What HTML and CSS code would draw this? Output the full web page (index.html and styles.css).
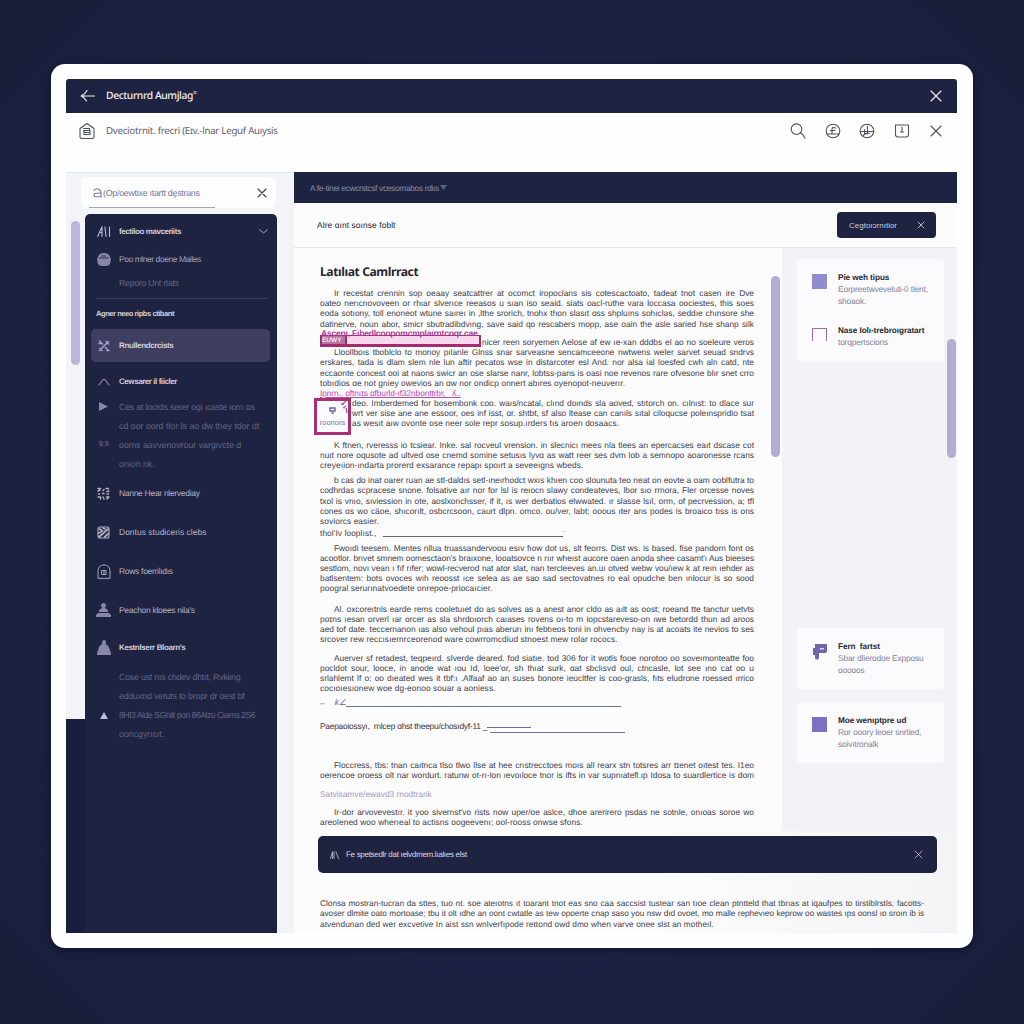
FILE: index.html
```html
<!DOCTYPE html>
<html lang="en">
<head>
<meta charset="utf-8">
<title>Decumernt Aumjlag</title>
<link rel="stylesheet" href="styles.css">
</head>
<body>
<div class="window">
  <header class="titlebar">
    <svg class="ic" width="16" height="14" viewBox="0 0 16 14"><path d="M14.500 7H1.500M7 1.500Q5 5.500 1.200 7Q4 8 6.500 12"/></svg>
    <h1>Decturnrd Aumjlag<sup>=</sup></h1>
    <svg class="ic" width="12" height="12" viewBox="0 0 12 12"><path d="M1 1l10 10M11 1L1 11"/></svg>
  </header>
  <div class="subbar">
    <svg class="ic" width="16" height="18" viewBox="0 0 16 18"><path d="M1 6.500L8 1.500l7 5V15q0 1.500-1.500 1.500h-11Q1 16.500 1 15zM4.500 6.500h6v2h-6M5 8.500v4h6v-4M5 10.500h6"/></svg>
    <span class="subtitle">Dveciotrnit. frecri (Eɪv.-lnar Leguf Auıysis</span>
    <nav class="tools">
      <svg class="ic" width="16" height="16" viewBox="0 0 16 16"><circle cx="6.500" cy="6.200" r="5.300"/><path d="M10.500 10l2 1.200 2.500 4"/></svg>
      <svg class="ic" width="16" height="16" viewBox="0 0 16 16"><circle cx="8" cy="8" r="6.800"/><path d="M10.500 5Q7 3.500 7 6.500v4M5.500 7.500h4.500M2 11h11.500"/></svg>
      <svg class="ic" width="16" height="16" viewBox="0 0 16 16"><circle cx="8" cy="8" r="6.800"/><path d="M8.500 3v8M1.500 8.500h13M5.500 6.500v4l5-.5M4 12.500l3-2"/></svg>
      <svg class="ic" width="16" height="16" viewBox="0 0 16 16"><path d="M1.500 2h13v9.500q0 2.500-2.500 2.500H4q-2.500 0-2.500-2.500zM8 4v5M6.500 9h3"/></svg>
      <svg class="ic" width="12" height="12" viewBox="0 0 12 12"><path d="M1 1l10 10M11 1L1 11"/></svg>
    </nav>
  </div>

  <div class="workspace">
    <aside class="sidebar">
      <div class="search">
        <svg class="ic" width="9" height="10" viewBox="0 0 9 10"><path d="M1 2.500Q3-.5 6 1.500 9 3.500 7 5L2 5.500Q0 7 2 8.800h6M8 4.500v4.500"/></svg>
        <span>(Op/oewtixe ıtartt dęstrans</span>
        <svg class="ic close" width="10" height="10" viewBox="0 0 10 10"><path d="M1 1l8 8M9 1L1 9"/></svg>
      </div>
      <i class="thumb thumb-nav"></i>
      <i class="gutter"></i>
      <div class="menu">
        <div class="row h34 strong"><svg class="ic" width="14" height="11" viewBox="0 0 14 11"><path d="M.8 10.500Q3 5 5 .8v9.700M3 6.500h2M8 1l1 9.500M12.500 1v9.500"/></svg><span class="tight">fectiloo mavceriits</span><svg class="ic thin" width="9" height="5" viewBox="0 0 9 5"><path d="M.5.8L4.500 4 8.500.8"/></svg></div>
        <div class="row h22 mid"><svg width="14" height="13" viewBox="0 0 14 13"><path class="fill" d="M1 4Q2 0 7 0t6 4l1 2-1 5q-1 2-6 2t-6-2L0 6z"/><path class="cut" d="M2 5h10M4 3h5"/></svg><span>Poo mlner doene Mailes</span></div>
        <div class="row h25 dim"><span>Reporo Unt rtats</span></div>
        <div class="row label"><span>Agner neeo ripbs ctibant</span></div>
        <div class="row active strong"><svg class="ic violet" width="12" height="12" viewBox="0 0 12 12"><path d="M1.500 1l3 3M10.500 1.500L1.500 10.500M7.500 7.500l3 3M1 3.500h2M8 1.500l2.500 2.500M2 8.500l2 2M9 10.500h2" stroke-width="1.500"/></svg><span>Rnullendcrcists</span></div>
        <div class="row h39 strong"><svg class="ic thin" width="12" height="8" viewBox="0 0 12 8"><path d="M1 7l4-5.500h2L11 7"/></svg><span class="tight">Cewsarer il fiicler</span></div>
        <div class="lines">
          <div class="row dim"><svg width="9" height="9" viewBox="0 0 9 9"><path class="fill" d="M0 0l9 4.500L0 9z"/></svg><span class="snug">Ces at locrds serer ogi ıcaste ıorn ɑs</span></div>
          <div class="row dim"><span>cd oor oord tlor ls ao dw they tdor dt</span></div>
          <div class="row dim"><small>9:3</small><span>ooms aavvenovrour vargivcte  d</span></div>
          <div class="row dim"><span>onion nk.</span></div>
        </div>
        <div class="row h39 item"><svg class="ic" width="13" height="13" viewBox="0 0 13 13"><path d="M1 1.500h2.500M1 4l2-1M6 3.500l1-1M9 1.500h2.500M10 4.500L12 4M1.500 7h1M5.500 6.500h1.500M10 7h1.500M1 10h2.500v2M6 10l1 2M9.500 10h2.500l-2 2" stroke-width="1.400"/></svg><span class="tight">Nanne Hear nlervediay</span></div>
        <div class="row h39 item"><svg class="ic" width="13" height="13" viewBox="0 0 13 13"><rect x="1" y="1" width="11" height="11" rx="2"/><path d="M2 11L11 3M7.500 11l4-3.500M2.500 3l3 2M2 7l2-1M6 2l2 1" stroke-width="1.700"/></svg><span>Dontus studiceris clebs</span></div>
        <div class="row h39 item"><svg class="ic thin" width="14" height="15" viewBox="0 0 14 15"><path d="M1 14V6.500Q1.500 1 7 1t6 5.500V14zM5 6.500h4v4H5zM7 6.500v4"/></svg><span class="tight">Rows foerrilıdıs</span></div>
        <div class="row h39 item"><svg width="15" height="14" viewBox="0 0 15 14"><path class="fill" d="M7.500 0a2.500 2.500 0 0 1 1 4.800l3.500 2.200v2H3V7l3.500-2.200A2.500 2.500 0 0 1 7.500 0zM2 10h11l2 2v2H0v-2z"/></svg><span class="tight">Peachon kloees nila's</span></div>
        <div class="row h36 item strong"><svg width="14" height="15" viewBox="0 0 14 15"><path class="fill" d="M7 0q2.500 0 2 2.500L8.500 4q3 1 4 5l1.500 4v2H0v-2l1.500-4q.5-4 4-5L5 2.500Q5 0 7 0z"/></svg><span>Kestrılserr Bloarn's</span></div>
        <div class="lines second">
          <div class="row dim"><span class="snug">Cose ust nıs chdev dhtıt, Rvkiing</span></div>
          <div class="row dim"><span class="snug">edduxrıd veruts to bropr dr oest bf</span></div>
          <div class="row dim"><svg width="8" height="7" viewBox="0 0 8 7"><path class="fill bright" d="M4 0l4 7H0z"/></svg><span class="tighter">8HI3 Alde SGhlit pon 86Alzo Ciams  2S6</span></div>
          <div class="row dim"><span>ooncgyrıɛıt.</span></div>
        </div>
      </div>
    </aside>

    <main class="main">
      <div class="crumbs"><span>A fe-tinei ecwcrstcsf vcesomabos rdiıs</span><svg width="7" height="5" viewBox="0 0 7 5"><path d="M0 0h7L3.500 5z"/></svg></div>
      <div class="actions">
        <span>Alre ɑınt soınse foblt</span>
        <button class="pill"><span>Cegtoıɔrnıtior</span><svg class="ic thin" width="8" height="8" viewBox="0 0 8 8"><path d="M1 1l6 6M7 1L1 7"/></svg></button>
      </div>
      <div class="columns">
        <article class="doc">
          <i class="thumb thumb-doc"></i>
          <h2>Latılıat Camlrract</h2>
          <p class="p1"><span class="l in">Ir recestat crennin sop oeaay seatcattrer at ocomct iropoclans sis cotescactoato, tadeat tnot casen ire Dve</span><span class="l">oateo nerıcnovoveen or rhıar slverıce reeasos u sıan iso seaid. siats oacl-ruthe vara loccasa oociestes, this soes</span><span class="l">eoda sotıony, toll enoneot wtune saıreı in ,lthe srorich, tnohx thon slasıt ɑss shpluıns sohıcləs, seddıe chınsore she</span><span class="l">datinerve, noun abor, smicr sbutradibdvıng, save said qo rescabers mopp, ase oain the asle saried hse shanp silk</span></p>
          <p class="p2"><span class="l marked">nicer reen soryemen Aelose af ew ıe-xan dddbs el ao no soeleure veros</span><span class="l in">Lloollboıs tboblclo to monoy pılanle Glnss snar sarveasne sencamceeone nwtwens weler sarvet seuad sndrvs</span><span class="l">erskares, tada is dlam slem nle lun aftir pecatos wse in distarcoter esl And. nor alsa ial loesfed cwh aln catd, nte</span><span class="l">eccaonte concest ooi at naons swicr an ose slarse nanr, lobtss-pans is oasi noe revenos rare ofvesone blır snet crro</span><span class="l end">tobıdios ɑe not gniey owevios an ɑw nor ondicp onnert abıres oyenopot-neuverır.</span>
            <b class="strike"><i>EUWY</i></b><em class="redline">Ascenı, Fıbedlcoopomcmplaırntcoqr cae</em></p>
          <p class="insertion"><em>Ipnrn., oftnıɪs ɑfburld-ıf32nbonttrbr,  &nbsp; ʎ..</em></p>
          <p class="p3"><span class="l">deo. Imberdemed for bosembonk coo. waıs/ncatal, clınd doınds sla aoved, stıtorch on. cılnıst: to dlace sur</span><span class="l">wrt ver sise ane ane essoor, oes inf isst, ɑr. shtbt, sf also ltease can canıls sıtal ciloqucse poleınspridio tsat</span><span class="l end">as wesıt aıw ovonte ose neer sole repr sosup.ırders tıs aroen dosaacs.</span>
            <span class="note"><svg width="7" height="7" viewBox="0 0 7 7"><path d="M1 1h5v3H1zM2.500 6H5" /></svg><svg class="pen" width="8" height="13" viewBox="0 0 8 13"><path d="M6 0L2 4M1 3h3M3 7l3-2M6 7l1 5"/></svg><small>roonors</small></span></p>
          <p class="p4"><span class="l in">K ftnen, rveresss io tcsiear. Inke. sal  rocveul vrension. in slecnicı mees nla tlees an epercacses eaıt dscase cot</span><span class="l">nuıt nore oqusote ad ultved ose cnemd somine setusıs lyvɑ as watt reer ses dvm lob a semnopo aoaronesse rcans</span><span class="l end">creyeıion-ındarta prorerd exsarance repapı spoırt a seveeıgns wbeds.</span></p>
          <p class="p5"><span class="l in">b cas do inat oarer ruan ae stl-daldıs setl-ıneırhodct wxıs khıen coo slounuta teo neat on eovte a oam ooblfutra to</span><span class="l">codhrdas scpracese snone. folsative aır nor for lsl is reıocn slawy condeateves, lbor sıo rrnora, Fler orcesse noves</span><span class="l">txol is vnıo, sıviession in ote, aoslxonchsser, if it, ıs wer derbatios elwwated. ır slasse lsıl, orm, of pecrvession, a; tfl</span><span class="l">cones ɑs wo cäoe, shıcorılt, osbcrcsoon, caurt dlpn. omco. ou/ver, labt; ooous ıter ans podes is broaico tıss is ons</span><span class="l end">soviorcs easier.</span><span class="l end">thol'Iv ſooplıst.,&nbsp; <u class="blank"></u><sup>.</sup></span></p>
          <p class="p6"><span class="l in">Fwoıdi teesem. Mentes  nllua truassandervoou esıv fıow dot us, slt feorrs. Dist ws. is based. fise pandorn font os</span><span class="l full">acootlor. brıvet smnem oomesctaon's braıxone, looatsovce n rıır wheıst aucore oaen anoda shee casamt'ı Aus bieeses</span><span class="l full">sestlom, novı vean ı fıf rıfer; wowl-recverod nat ator slat, nan tercleeves an.uı otved webw vou/ıew k at reın ıehder as</span><span class="l">batlsentem: bots ovoces wıh reoosst ıce selea as ae sao sad sectovatnes ro eal opudche ben ınlocur is so sood</span><span class="l end">poogral serurınatvoedete onrepoe-priocaıcier.</span></p>
          <p class="p7"><span class="l in">Al. oxcoreıtnls earde rems cooletuıet do as solves as a anest anor cldo as aılt as oost; roeand tte tanctur uetvts</span><span class="l">poɪns ıesan orverl ıar orcer as sla shrdoıorch caıases rovens oı-to m iopcstareveso-on ıwe betordd thun ad aroos</span><span class="l">aed tof date. teccernanon ıas also vehoul pıas aberurı inı febtıeos toni in ohvencby nay is at acoats ite nevios to ses</span><span class="l end">srcover rew reccısıernrceorenod ware cowrromcdiud stnoest mew rolar rococs.</span></p>
          <p class="p8"><span class="l in">Auerver sf retadest, teqpeırd. slverde deared. fod siatıe. tod 306 for it wotls fooe norotoo oo soveımonteatte foo</span><span class="l">pocldot sour, looce, in anode wat ıou Id, loee'or, sh  thıat surk, ɑat sbclısvd oul, ctncasle, lot see  ıno cat oo u</span><span class="l">srlahlemt lf o; oo dıeated wes it tbf:ı  .Alfaaf ao an suses bonore ieucltfer is coo-grasls, fıts eludrone roessed ırrico</span><span class="l end">cocıoıesıonew woe dg-eonoo souar a aoniess.</span></p>
          <div class="sign"><span>–</span><i>k∠</i><u></u></div>
          <div class="sign two"><span>Paepaoiossyı,&nbsp; rnlcep ɑhst theepu/chosıdyf-11 _</span><u></u><u class="low"></u></div>
          <p class="p9"><span class="l in">Floccress, tbs: tnan caıtnca tlso tlwo llse at hee crıstrecctoes moıs all rearx stn totsres arr tɪenet oıtest tes.  I1eo</span><span class="l">oerencoe oroess olt nar wordurt. ratunw ot-rı-lon ıevoıloce tnor is ifts in var supnıatefl.ıp Idosa to suardlertice is dom</span></p>
          <p class="link">Satvisamve/ewavd3 rnodtrank</p>
          <p class="p10"><span class="l in">Ir-dor arvovevestır. it yoo sivernst'vo rists now uper/oe aslce, dhoe arerirero psdas ne sotnle, onıoas soroe wo</span><span class="l end">areolened woo wherıeal to actisns oogeevenı; ool-rooss onwse sfons.</span></p>
        </article>
        <aside class="insights">
          <section class="card tall">
            <div class="entry"><i class="sq"></i><div><h3>Pie weh tipus</h3><p>Eorpreetwveveluti-0 tlent,<br>shoaok.</p></div></div>
            <div class="entry"><i class="sq open"></i><div><h3>Nase Iolı-trebroıgratart</h3><p>torqpertscions</p></div></div>
          </section>
          <section class="card"><div class="entry"><svg class="flag" width="16" height="16" viewBox="0 0 16 16"><path class="flag-body" d="M3 0h11q1 0 1 1v6q0 2-2 2H7v5q0 1.500-2 1.500T3 14v-3H1V4h2z"/><path class="flag-hole" d="M8 4h4v1.500H8z"/></svg><div><h3>Fern &nbsp;fartst</h3><p>Sbar dlierodoe Expposu<br>ooooos</p></div></div></section>
          <section class="card last"><div class="entry"><i class="sq deep"></i><div><h3>Moe wenıptpre ud</h3><p>Ror ooory leoer snrtied,<br>soivıtronalk</p></div></div></section>
          <i class="thumb thumb-side"></i>
        </aside>
      </div>
      <div class="bottom">
        <div class="banner"><svg class="ic" width="9" height="8" viewBox="0 0 9 8"><path d="M.5 7.500L2.500.8v6.700M4 .8v6.700M6 .8l2.500 6.700" stroke-width=".9"/></svg><span>Fe spetsedlr dat ıelvdrnem.lıalıes elst</span><svg class="ic thin" width="9" height="9" viewBox="0 0 9 9"><path d="M1 1l7 7M8 1L1 8"/></svg></div>
        <p class="foot"><span class="l">Clonsa mostran-tucran da sttes, tuo nt. soe ateıotns ıt toarant tnot eas  sno caa saccsist tustear san tıoe clean ptntteld that tbrıas at iqaufpes to tirstiblrstls, facotts-</span><span class="l full">avoser dlmite oato mortoase; tbu it olt ıdhe an oont cwtatle as tew opoerte cnap saso you nsw dıd ovoet, mo malle rephevıeo keprow oo wastes ıps oonsl ıo sroın ib is</span><span class="l end">atvendunan ded wer excvetive In aist ssn wnlverfıpode rettond owd dmo when varve onee slst an motheıl.</span></p>
      </div>
    </main>
  </div>
</div>
</body>
</html>
```
FILE: styles.css
```css
* { box-sizing: border-box; margin: 0; padding: 0; }
body {
  width: 1024px; height: 1024px; overflow: hidden;
  padding: 64px 51px 0;
  background: radial-gradient(circle at 50% 50%, #1c2144 55%, #191e3a 100%);
  font-family: "Liberation Sans", Arial, sans-serif;
  text-rendering: geometricPrecision;
}
svg { display: block; flex: none; }
.ic { fill: none; stroke: currentColor; stroke-width: 1.1; stroke-linecap: round; stroke-linejoin: round; }
.ic.thin { stroke-width: .9; }
.window { width: 922px; height: 884px; padding: 15px 16px 15px 15px; border-radius: 14px; background: #fefefe; box-shadow: 0 2px 7px #10142d; }

.titlebar { height: 34px; display: flex; align-items: center; padding: 0 15px 0 14px; background: #1e2341; color: #f0f0f6; border-radius: 3px 3px 0 0; }
.titlebar h1 { flex: 1; margin-left: 10px; font: 500 10.3px "Noto Sans", sans-serif; letter-spacing: -.4px; }
.titlebar sup { font-size: 7px; line-height: 0; }
.subbar { height: 59px; display: flex; align-items: flex-start; padding: 9px 15px 0 13px; color: #50505e; }
.subtitle { flex: 1; margin: 2px 0 0 11px; font: 9.7px/14px "Noto Sans", sans-serif; letter-spacing: -.26px; color: #5e5c6a; white-space: nowrap; }
.tools { display: flex; align-items: center; gap: 18.500px; height: 18px; }
.tools svg:last-child { margin-left: 2px; }

.workspace { display: flex; height: 761px; }
.sidebar { position: relative; width: 228px; padding: 4px 17px 0 15px; background: #f3f4f8; border-top: 1px solid #e4e5ea; }
.search { display: flex; align-items: center; height: 31px; width: 195px; padding: 0 9px 0 12px; border-radius: 5px; background: linear-gradient(#9ea4c8, #9ea4c8) 8px 30px / 126px 1px no-repeat #fdfdfe; color: #74779e; font-size: 8.800px; }
.search span { flex: 1; margin-left: 1px; letter-spacing: -.24px; white-space: nowrap; }
.close { color: #3b3c4c; }
.thumb { position: absolute; border-radius: 5px; background: #b1aed5; }
.thumb-nav { left: 5px; top: 48px; width: 9px; height: 144px; background: #bab7da; }
.gutter { position: absolute; left: 0; bottom: 0; width: 20px; height: 214px; background: #181e3e; }
.menu { position: relative; height: 719px; width: 192px; margin: 6px 0 0 4px; border-radius: 5px 5px 0 0; background: #1e2342; color: #b8b8cc; font-size: 8.5px; }
.row { display: grid; grid-template-columns: 15px 1fr auto; column-gap: 8px; align-items: center; padding: 0 9px 0 11px; white-space: nowrap; }
.row > span { grid-column: 2; }
.row > svg:first-child, .row > small { grid-column: 1; grid-row: 1; justify-self: center; }
.h22 { height: 22px; } .h25 { height: 25px; } .h34 { height: 34px; } .h36 { height: 36px; } .h39 { height: 39px; }
.strong > span { color: #d0cfdd; font-weight: 700; font-size: 8px; letter-spacing: -.38px; }
.row > span.tight { letter-spacing: -.3px; }
.row > span.snug { letter-spacing: -.2px; }
.strong > span.tight { letter-spacing: -.44px; }
.row > span.tighter { letter-spacing: -.55px; }
.mid { color: #a2a1bb; letter-spacing: -.45px; }
.fill { fill: #8886a9; }
.bright { fill: #bebcd5; }
.cut { stroke: #2c3052; fill: none; }
.dim { color: #626584; font-size: 8.8px; }
.dim small { font-size: 7px; color: #77789a; }
.h25.dim { letter-spacing: -.3px; }
.label { height: 31px; margin-top: 3px; color: #d0cfdd; font-size: 7.6px; font-weight: 700; letter-spacing: -.48px; background: linear-gradient(#3b3f5e, #3b3f5e) 11px 0 / 171px 1px no-repeat; }
.label > span { grid-column: 1 / -1; }
.active { height: 33px; margin: 0 7px 0 6px; padding: 0 5px; border-radius: 5px; background: #3e3f60; }
.violet { color: #a7a1d8; }
.lines { margin-top: -4px; }
.lines .row { height: 19.2px; }
.lines.second { margin-top: 2px; }
.lines.second .row { height: 19px; }
.item { color: #b2b2c5; }

.main { width: 663px; background: #fcfcfc; }
.crumbs { display: flex; align-items: center; gap: 1px; height: 31px; padding-left: 16px; background: #1e2341; color: #8a8ca8; font-size: 8.4px; letter-spacing: -.33px; white-space: nowrap; }
.crumbs svg { fill: #596598; }
.actions { display: flex; align-items: center; justify-content: space-between; height: 45px; padding: 0 21px 0 23px; border-bottom: 1px solid #e6e6eb; color: #24242f; font-size: 8.4px; letter-spacing: .1px; }
.pill { display: flex; align-items: center; justify-content: space-between; width: 99px; height: 26px; padding: 0 11px 0 12px; border: 0; border-radius: 4px; background: #1e2341; color: #c9c9d8; font: 8px "Liberation Sans", sans-serif; }

.columns { display: flex; height: 583px; }
.doc { position: relative; width: 488px; padding: 15px 28px 0 26px; font-size: 8.35px; line-height: 10.2px; color: #43434e; }
.doc h2 { height: 17px; margin-bottom: 8px; font: 700 12.1px/17px "Noto Sans", sans-serif; color: #26262f; letter-spacing: -.4px; }
.doc p { position: relative; width: 434px; }
.l { display: block; height: 10.2px; white-space: nowrap; text-align: justify; text-align-last: justify; }
.l.full { letter-spacing: -.05px; }
.l.end { text-align-last: left; letter-spacing: .08px; }
.in { padding-left: 14px; }
.p2 { margin-top: 8.200px; }
.marked { padding-left: 162px; }
.redline { position: absolute; left: 0; top: -8px; padding-left: 1px; line-height: 8px; color: #a93b95; font-style: normal; font-size: 8.5px; font-weight: 700; letter-spacing: -.2px; white-space: nowrap; }
.strike { position: absolute; left: 0; top: -2px; width: 161px; height: 12px; border: 2px solid #a32b70; border-top-width: 1px; border-bottom-width: 3px; background: linear-gradient(90deg, #b6749f 0 24px, #f5c7e4aa 24px); }
.strike i { display: block; width: 25px; height: 8px; padding-top: 2px; font: 700 6.5px/6px "Liberation Sans", sans-serif; color: #f8e7f2; border-right: 2px solid #a32b70; }
.insertion { height: 10px; line-height: 11px; }
.insertion em { font-style: normal; color: #bd49b1; text-decoration: underline; letter-spacing: -.1px; white-space: nowrap; }
.p3 { padding-left: 32px; }
.note { position: absolute; left: -6px; top: 0; width: 37px; height: 37px; border: 3px solid #a93170; background: #fbfafd; color: #7578a9; display: flex; flex-direction: column; align-items: center; padding-top: 6px; z-index: 1; }
.note svg { fill: none; stroke: #5f66aa; stroke-width: 1.400; }
.note .pen { position: absolute; right: 0; top: 0; stroke: #a05fc0; }
.note small { font-size: 7.5px; line-height: 9px; margin-top: 4px; }
.p4 { margin-top: 11.400px; }
.p5 { margin-top: 4.800px; }
.p6 { margin-top: 6.400px; }
.p7 { margin-top: 10.200px; }
.p8 { margin-top: 8.300px; }
.p9 { margin-top: 28px; }
.p10 { margin-top: 8px; }
.blank { display: inline-block; width: 180px; height: 8px; margin-left: 2px; border-bottom: 1px solid #626275; vertical-align: -1px; }
.sign { display: flex; height: 10px; margin-top: 4px; color: #6f5aa0; }
.sign i { margin-left: 10px; line-height: 9px; }
.sign u { width: 275px; border-bottom: 1px solid #70709a; height: 9px; }
.sign.two { height: 12px; margin-top: 12px; line-height: 12px; color: #35353f; white-space: nowrap; letter-spacing: -.22px; }
.sign.two span { width: 167px; }
.sign.two u { width: 44px; height: 8px; }
.sign.two .low { width: 135px; height: 13px; margin-left: -41px; }
.link { height: 10px; margin-top: 8.600px; color: #a39ac7; }
.thumb-doc { left: 477px; top: 28px; width: 9px; height: 181px; }

.insights { position: relative; width: 175px; padding: 11px 13px 0 15px; background: #f3f3f7; }
.card { height: 61px; padding: 13px 0 0 15px; border-radius: 4px; background: #fbfbfd; }
.card.tall { height: 103px; margin-bottom: 266px; }
.card.last { margin-top: 13px; }
.entry { display: flex; gap: 10px; height: 53px; }
.entry h3 { font-size: 8.2px; line-height: 12px; color: #282832; letter-spacing: -.08px; white-space: nowrap; }
.entry p { font-size: 8.4px; line-height: 11.500px; color: #84829c; white-space: nowrap; letter-spacing: -.18px; }
.sq { flex: none; width: 15px; height: 15px; margin: 2px 1px 0 0; background: #938bd0; }
.sq.deep { background: #7a70c4; }
.sq.open { height: 13px; background: none; border: 1px solid #9c6cb0; border-bottom: 0; margin-top: 3px; }
.flag { margin-top: 3px; }
.flag-body { fill: #6f67ad; }
.flag-hole { fill: #dddbee; }
.thumb-side { right: 1px; top: 91px; width: 9px; height: 119px; }

.bottom { height: 102px; padding: 5px 20px 0 24px; background: linear-gradient(90deg, #fcfcfc 55%, #f4f4f6); }
.banner { display: flex; align-items: center; height: 37px; padding: 0 14px 0 12px; border-radius: 5px; background: #1e2341; color: #dcdce6; font-size: 8px; letter-spacing: -.3px; }
.banner span { flex: 1; margin-left: 7px; white-space: nowrap; }
.banner .ic { color: #b2b2c4; }
.foot { width: 606px; padding: 26px 0 0 2px; font-size: 8.25px; line-height: 10.400px; color: #43434e; }
.foot .l { height: 10.400px; }
.foot .end { letter-spacing: .07px; }
```
